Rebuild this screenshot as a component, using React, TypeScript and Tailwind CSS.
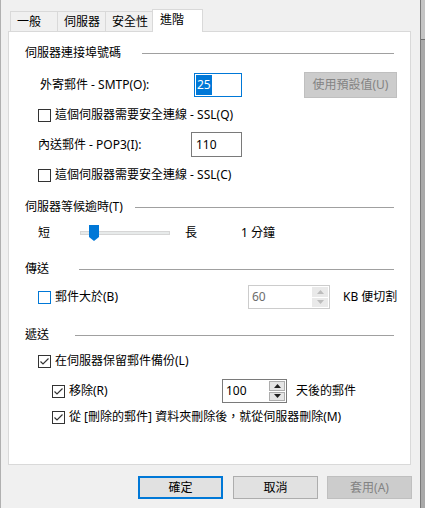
import React from "react";

const font = "font-['Noto_Sans','Noto_Sans_CJK_TC',sans-serif]";

function Header({ text, w }: { text: string; w: string }) {
  return (
    <div className="flex h-[16px] items-center">
      <span className={`${w} shrink-0 leading-[16px] whitespace-nowrap`}>{text}</span>
      <div className="h-px flex-1 bg-[#a0a0a0]" />
    </div>
  );
}

function Box({ checked, blue }: { checked?: boolean; blue?: boolean }) {
  return (
    <div
      className={`flex h-[13px] w-[13px] shrink-0 items-center justify-center border bg-white ${
        blue ? "border-[#0078d7]" : "border-[#333333]"
      }`}
    >
      {checked && (
        <svg width="11" height="11" viewBox="0 0 11 11">
          <path d="M1.5 5.5 L4 8 L9.5 2.5" fill="none" stroke="#333333" strokeWidth="1.2" />
        </svg>
      )}
    </div>
  );
}

function Spin({ disabled }: { disabled?: boolean }) {
  const arrow = disabled ? "#bcbcbc" : "#202020";
  const bg = disabled ? "bg-[#e9e9e9]" : "bg-[#e5e5e5]";
  return (
    <div className="flex h-full w-[17px] shrink-0 flex-col gap-px py-px pr-px">
      <div className={`flex flex-1 items-center justify-center ${bg} ${disabled ? "" : "border border-[#adadad]"}`}>
        <svg width="7" height="4" viewBox="0 0 7 4">
          <path d="M0 4 L3.5 0 L7 4 Z" fill={arrow} />
        </svg>
      </div>
      <div className={`flex flex-1 items-center justify-center ${bg} ${disabled ? "" : "border border-[#adadad]"}`}>
        <svg width="7" height="4" viewBox="0 0 7 4">
          <path d="M0 0 L3.5 4 L7 0 Z" fill={arrow} />
        </svg>
      </div>
    </div>
  );
}

export default function App() {
  return (
    <div className={`flex h-[508px] w-[425px] overflow-hidden bg-[#f0f0f0] text-[12px] text-black ${font}`}>
      <div className="w-px shrink-0 bg-[#b0b0b0]" />
      <div className="flex w-[419px] shrink-0 flex-col">
        {/* tabs */}
        <div className="mt-[9px] flex h-[22px] items-end pl-[9px]">
          <div className="flex h-[20px] w-[47px] items-center border-l border-t border-[#d9d9d9] pl-[6px] leading-[16px]">一般</div>
          <div className="flex h-[20px] w-[48px] items-center border-l border-t border-[#d9d9d9] pl-[6px] leading-[16px]">伺服器</div>
          <div className="flex h-[20px] w-[47px] items-center border-l border-t border-[#d9d9d9] pl-[6px] leading-[16px]">安全性</div>
          <div className="relative z-10 -mb-px flex h-[23px] w-[51px] items-center border-x border-t border-[#d9d9d9] bg-white pb-[2px] pl-[7px] leading-[16px]">
            進階
          </div>
        </div>
        {/* panel */}
        <div className="ml-[7px] flex h-[434px] w-[403px] flex-col border border-[#d9d9d9] bg-white px-[16px] pt-[13px]">
          <Header text="伺服器連接埠號碼" w="w-[117px]" />

          <div className="mt-[11px] flex h-[26px] items-center">
            <span className="ml-[15px] w-[154px] shrink-0 leading-[16px]">外寄郵件 - SMTP(O):</span>
            <div className="flex h-[24px] w-[48px] shrink-0 items-center border border-[#0078d7] bg-white pl-px">
              <span className="bg-[#0078d7] px-px leading-[20px] text-white">25</span>
            </div>
            <div className="ml-[62px] flex h-[26px] w-[93px] shrink-0 items-center justify-center border border-[#bfbfbf] bg-[#cccccc] leading-[16px] text-[#838383]">
              使用預設值(U)
            </div>
          </div>

          <div className="mt-[9px] flex h-[16px] items-center gap-[4px] pl-[13px]">
            <Box />
            <span className="leading-[16px]">這個伺服器需要安全連線 - SSL(Q)</span>
          </div>

          <div className="mt-[9px] flex h-[25px] items-center">
            <span className="ml-[13px] w-[153px] shrink-0 leading-[16px]">內送郵件 - POP3(I):</span>
            <div className="flex h-[25px] w-[51px] shrink-0 items-center border border-[#7a7a7a] bg-white pl-[4px] leading-[16px]">110</div>
          </div>

          <div className="mt-[10px] flex h-[16px] items-center gap-[4px] pl-[13px]">
            <Box />
            <span className="leading-[16px]">這個伺服器需要安全連線 - SSL(C)</span>
          </div>

          <div className="mt-[16px]">
            <Header text="伺服器等候逾時(T)" w="w-[110px]" />
          </div>

          <div className="mt-[10px] flex h-[16px] items-center">
            <span className="ml-[13px] w-[42px] shrink-0 leading-[16px]">短</span>
            <div className="relative h-[16px] w-[90px] shrink-0">
              <div className="mt-[6px] h-[4px] w-full border border-[#d6d6d6] bg-[#e7eaea]" />
              <svg className="absolute left-[9px] top-0" width="10" height="16" viewBox="0 0 10 16">
                <path d="M0 0 H10 V12 L5 16 L0 12 Z" fill="#0078d7" />
              </svg>
            </div>
            <span className="ml-[15px] w-[56px] shrink-0 leading-[16px]">長</span>
            <span className="leading-[16px]">1 分鐘</span>
          </div>

          <div className="mt-[20px]">
            <Header text="傳送" w="w-[54px]" />
          </div>

          <div className="mt-[8px] flex h-[24px] items-center">
            <div className="ml-[13px] flex w-[210px] shrink-0 items-center gap-[4px]">
              <Box blue />
              <span className="leading-[16px]">郵件大於(B)</span>
            </div>
            <div className="flex h-[24px] w-[82px] shrink-0 items-center border border-[#cccccc] bg-white">
              <span className="flex-1 pl-[3px] leading-[16px] text-[#6d6d6d]">60</span>
              <Spin disabled />
            </div>
            <span className="ml-[13px] shrink-0 whitespace-nowrap leading-[16px]">KB 便切割</span>
          </div>

          <div className="mt-[18px]">
            <Header text="遞送" w="w-[50px]" />
          </div>

          <div className="mt-[10px] flex h-[16px] items-center gap-[4px] pl-[13px]">
            <Box checked />
            <span className="leading-[16px]">在伺服器保留郵件備份(L)</span>
          </div>

          <div className="mt-[10px] flex h-[24px] items-center">
            <div className="ml-[27px] flex w-[170px] shrink-0 items-center gap-[4px]">
              <Box checked />
              <span className="leading-[16px]">移除(R)</span>
            </div>
            <div className="flex h-[24px] w-[65px] shrink-0 items-center border border-[#7a7a7a] bg-white">
              <span className="flex-1 pl-[3px] leading-[16px]">100</span>
              <Spin />
            </div>
            <span className="ml-[9px] shrink-0 whitespace-nowrap leading-[16px]">天後的郵件</span>
          </div>

          <div className="mt-[6px] flex h-[16px] items-center gap-[4px] pl-[27px]">
            <Box checked />
            <span className="whitespace-nowrap leading-[16px]">從 [刪除的郵件] 資料夾刪除後，就從伺服器刪除(M)</span>
          </div>
        </div>

        {/* buttons */}
        <div className="mt-[11px] flex gap-[10px] pl-[137px]">
          <div className="flex h-[23px] w-[85px] items-center justify-center border-2 border-[#0078d7] bg-[#e1e1e1] leading-[16px]">確定</div>
          <div className="flex h-[23px] w-[85px] items-center justify-center border border-[#adadad] bg-[#e1e1e1] leading-[16px]">取消</div>
          <div className="-ml-px flex h-[23px] w-[85px] items-center justify-center border border-[#bfbfbf] bg-[#cccccc] leading-[16px] text-[#838383]">套用(A)</div>
        </div>
      </div>
      <div className="w-px shrink-0 bg-[#7a7a7a]" />
      <div className="flex w-[4px] shrink-0 flex-col bg-[#a9a9a9]">
        <div className="h-[39px] bg-[#c4c4c4]" />
        <div className="h-px bg-[#6e6e6e]" />
      </div>
    </div>
  );
}
